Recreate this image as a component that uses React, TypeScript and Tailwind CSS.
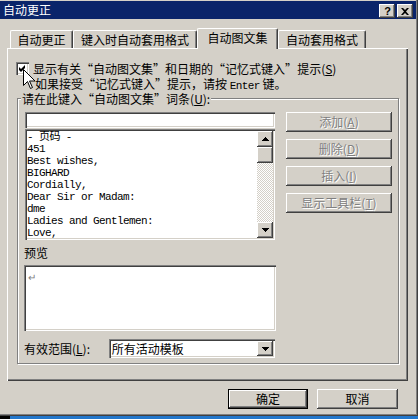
import React from 'react';

const raised =
  'bg-[#d4d0c8] shadow-[inset_-1px_-1px_0_#404040,inset_1px_1px_0_#fff,inset_-2px_-2px_0_#808080,inset_2px_2px_0_#d4d0c8]';
const sunken =
  'bg-white shadow-[inset_1px_1px_0_#808080,inset_2px_2px_0_#404040,inset_-1px_-1px_0_#fff,inset_-2px_-2px_0_#d4d0c8]';
const disabledText = 'text-[#808080] [text-shadow:1px_1px_0_#fff]';
const mono = "font-['Liberation_Mono','Noto_Sans_CJK_SC',monospace] text-[11px] tracking-[-0.6px]";

// full-width quote marks, like the old SimSun ones
const Q = ({ c }: { c: string }) => <span className="[font-feature-settings:'fwid']">{c}</span>;

const UpArrow = () => (
  <svg width="7" height="4" viewBox="0 0 7 4">
    <path d="M3 0h1v1h1v1h1v1h1v1H0V3h1V2h1V1h1z" fill="#000" />
  </svg>
);
const DownArrow = () => (
  <svg width="7" height="4" viewBox="0 0 7 4">
    <path d="M0 0h7v1H6v1H5v1H4v1H3V3H2V2H1V1H0z" fill="#000" />
  </svg>
);

const entries = [
  '- 页码 -',
  '451',
  'Best wishes,',
  'BIGHARD',
  'Cordially,',
  'Dear Sir or Madam:',
  'dme',
  'Ladies and Gentlemen:',
  'Love,',
];

const sideButtons = [
  { label: '添加', key: 'A' },
  { label: '删除', key: 'D' },
  { label: '插入', key: 'I' },
  { label: '显示工具栏', key: 'T' },
];

export default function App() {
  return (
    <div className="relative w-[418px] h-[419px] overflow-hidden bg-[#2277cc] font-['Noto_Sans_CJK_SC',sans-serif] text-[12px] leading-[14px] text-black">
      {/* dialog window */}
      <div className="w-[418px] h-[416px] bg-[#d4d0c8] pt-px flex flex-col shadow-[inset_-1px_-1px_0_#404040,inset_-2px_-2px_0_#808080]">
        {/* title bar */}
        <div className="mr-[2px] h-[18px] bg-[#0a246a] flex items-center pl-[3px] pr-[3px]">
          <span className="text-white">自动更正</span>
          <div className="ml-auto flex gap-[2px] mt-[2px]">
            <div className={`w-[16px] h-[14px] flex items-center justify-center ${raised}`}>
              <span className="font-['Liberation_Sans',sans-serif] font-bold text-[11px] leading-none pl-px">?</span>
            </div>
            <div className={`w-[16px] h-[14px] flex items-center justify-center ${raised}`}>
              <svg width="8" height="7" viewBox="0 0 8 7">
                <path d="M0 0h2l2 2 2-2h2L5 3.5 8 7H6L4 5 2 7H0l3-3.5z" fill="#000" />
              </svg>
            </div>
          </div>
        </div>

        {/* tabs */}
        <div className="h-[29px] flex items-end pl-[10px]">
          <div className="w-[63px] h-[18px] border-t border-l border-white border-r border-r-[#404040] shadow-[inset_-1px_0_0_#808080] rounded-t-[2px] pt-[2px] text-center">
            自动更正
          </div>
          <div className="w-[124px] h-[18px] border-t border-l border-white border-r border-r-[#404040] shadow-[inset_-1px_0_0_#808080] rounded-t-[2px] pt-[2px] text-center">
            键入时自动套用格式
          </div>
          <div className="relative z-10 w-[81px] h-[21px] -mb-px bg-[#d4d0c8] border-t border-l border-white border-r border-r-[#404040] shadow-[inset_-1px_0_0_#808080] rounded-t-[2px] pt-[2px] text-center">
            自动图文集
          </div>
          <div className="w-[88px] h-[18px] border-t border-l border-white border-r border-r-[#404040] shadow-[inset_-1px_0_0_#808080] rounded-t-[2px] pt-[2px] text-center">
            自动套用格式
          </div>
        </div>

        {/* tab panel */}
        <div className="ml-[7px] w-[401px] h-[333px] border-t border-l border-white shadow-[inset_-1px_-1px_0_#404040,inset_-2px_-2px_0_#808080] flex flex-col">
          <div className="mt-[13px] ml-[8px] h-[13px] flex items-center gap-[4px]">
            <div className={`w-[13px] h-[13px] shrink-0 ${sunken}`}>
              <svg width="13" height="13" viewBox="0 0 13 13">
                <path d="M3 5l2 2 4-4v3l-4 4-2-2z" fill="#000" />
              </svg>
            </div>
            <span className="whitespace-nowrap leading-[13px]">
              显示有关<Q c="“" />自动图文集<Q c="”" />和日期的<Q c="“" />记忆式键入<Q c="”" />提示(<u>S</u>)
            </span>
          </div>
          <div className="mt-[2px] ml-[27px] h-[13px] leading-[13px] whitespace-nowrap">
            如果接受<Q c="“" />记忆式键入<Q c="”" />提示，请按 <span className={mono}>Enter</span> 键。
          </div>

          {/* group box */}
          <div className="mt-[8px] ml-[9px] w-[382px] h-[266px] border border-[#808080] shadow-[inset_1px_1px_0_#fff,1px_1px_0_#fff]">
            <div className="-mt-[7px] ml-[3px] w-fit px-px bg-[#d4d0c8] h-[13px] leading-[13px] whitespace-nowrap">
              请在此键入<Q c="“" />自动图文集<Q c="”" />词条(<u>U</u>):
            </div>
            <div className="mt-[7px] ml-[7px] flex gap-[11px]">
              <div className="w-[250px] flex flex-col">
                <div className={`h-[16px] ${sunken}`} />
                <div className={`mt-px h-[111px] p-[2px] flex ${sunken}`}>
                  <div className={`flex-1 leading-[12px] overflow-hidden ${mono}`}>
                    {entries.map((e) => (
                      <div key={e} className="h-[12px] whitespace-pre">
                        {e}
                      </div>
                    ))}
                  </div>
                  <div className="w-[16px] flex flex-col">
                    <div className={`h-[16px] flex items-center justify-center ${raised}`}>
                      <UpArrow />
                    </div>
                    <div className={`h-[16px] ${raised}`} />
                    <div className="flex-1 bg-[image:repeating-conic-gradient(#fff_0_25%,#d4d0c8_0_50%)] bg-[length:2px_2px]" />
                    <div className={`h-[16px] flex items-center justify-center ${raised}`}>
                      <DownArrow />
                    </div>
                  </div>
                </div>

                <div className="mt-[6px] -ml-px h-[14px]">预览</div>
                <div className={`mt-[5px] -ml-px w-[252px] h-[66px] px-[4px] pt-[4px] ${sunken}`}>
                  <span className="text-[#808080] text-[10px] leading-none">↵</span>
                </div>

                <div className="mt-[8px] -ml-px h-[19px] flex items-center">
                  <span className="w-[85px] whitespace-nowrap">
                    有效范围(<u>L</u>):
                  </span>
                  <div className={`w-[167px] h-[19px] flex items-center pl-[3px] pr-[2px] ${sunken}`}>
                    <span className="flex-1">所有活动模板</span>
                    <div className={`w-[16px] h-[15px] flex items-center justify-center ${raised}`}>
                      <DownArrow />
                    </div>
                  </div>
                </div>
              </div>

              <div className="w-[106px] flex flex-col gap-[7px]">
                {sideButtons.map((b) => (
                  <div key={b.key} className={`h-[20px] flex items-center justify-center whitespace-nowrap ${raised} ${disabledText}`}>
                    {b.label}(<u>{b.key}</u>)
                  </div>
                ))}
              </div>
            </div>
          </div>
        </div>

        {/* dialog buttons */}
        <div className="mt-[8px] flex justify-end gap-[9px] pr-[20px]">
          <div className="w-[80px] h-[20px] border border-black bg-[#d4d0c8] shadow-[inset_-1px_-1px_0_#404040,inset_1px_1px_0_#fff,inset_-2px_-2px_0_#808080] flex items-center justify-center">
            确定
          </div>
          <div className={`w-[81px] h-[20px] flex items-center justify-center ${raised}`}>取消</div>
        </div>
      </div>
      <div className="flex h-[3px]">
        <div className="w-[10px] bg-black" />
        <div className="flex-1" />
      </div>

      {/* mouse pointer over the checkbox */}
      <svg className="absolute left-[23px] top-[69px]" width="13" height="20" viewBox="0 0 13 20">
        <path d="M0.5 0.5v16l4-4 3 7 2-1-3-6.5h5.5z" fill="#fff" stroke="#000" strokeWidth="1" />
      </svg>
    </div>
  );
}
